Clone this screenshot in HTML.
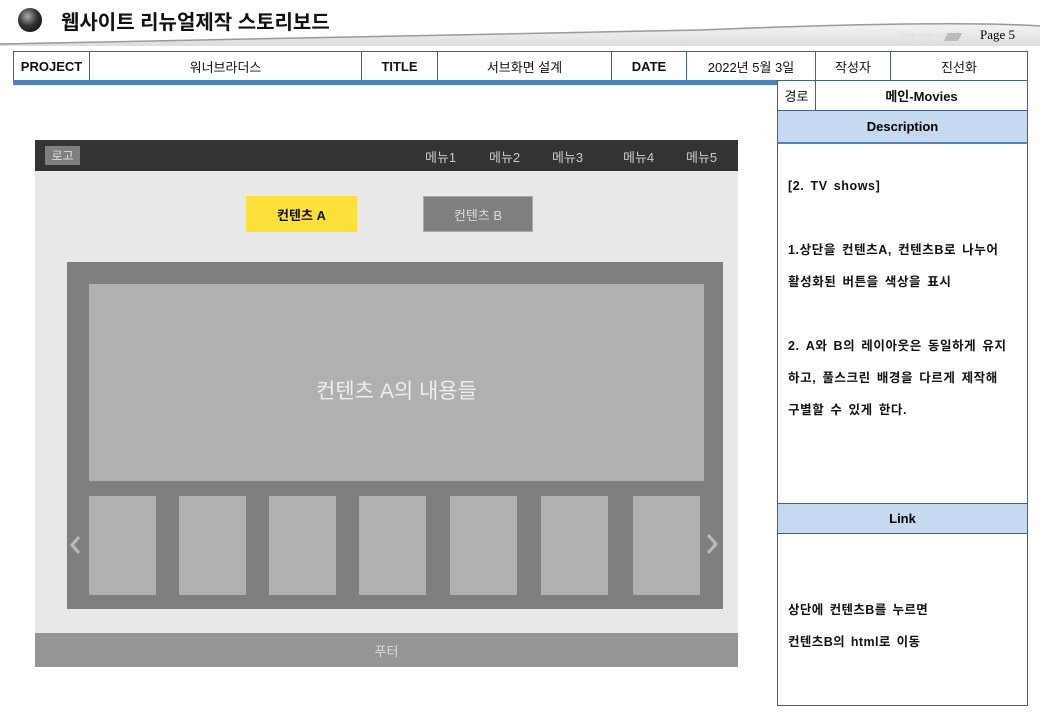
<!DOCTYPE html>
<html><head><meta charset="utf-8"><style>
*{margin:0;padding:0;box-sizing:border-box}
body{width:1040px;height:720px;background:#fff;position:relative;overflow:hidden;font-family:"Liberation Sans","Noto Sans CJK KR",sans-serif}
.a{position:absolute}
.c{display:flex;align-items:center;justify-content:center}
table{border-collapse:collapse;position:absolute}
td{border:1px solid #3e5f92;text-align:center;font-size:13px;color:#111}
.m span{position:absolute;white-space:nowrap}
</style></head><body>
<div class="a" style="left:0;top:0;width:1040px;height:46px;background:linear-gradient(#fff,#f0f0f0 60%,#ddd)"></div>
<svg class="a" style="left:0;top:0" width="1040" height="50"><path d="M0 44 Q300 38 700 30 Q950 20 1040 26 L1040 0 L0 0Z" fill="#fff"/><path d="M0 44 Q300 38 700 30 Q950 20 1040 26" stroke="#999" stroke-width="1.5" fill="none"/></svg>
<div class="a" style="left:18px;top:8px;width:24px;height:24px;border-radius:50%;background:radial-gradient(circle at 40% 35%,#aaa,#333 45%,#000)"></div>
<div class="a" style="left:61px;top:6px;font-size:20px;font-weight:bold;color:#111">웹사이트 리뉴얼제작 스토리보드</div>
<svg class="a" style="left:898px;top:33px" width="64" height="8"><path d="M4 0H18L14 8H0Z M22 0H36L32 8H18Z M40 0H54L50 8H36Z" fill="#e4e4e4"/><path d="M50 0H64L60 8H46Z" fill="#bbb"/></svg>
<div class="a" style="left:980px;top:27px;font-family:'Liberation Serif',serif;font-size:13px">Page 5</div>
<table style="left:13px;top:51px;width:1015px;height:30px"><tr>
<td style="width:76px;font-weight:bold">PROJECT</td><td style="width:272px">워너브라더스</td><td style="width:76px;font-weight:bold">TITLE</td><td style="width:174px">서브화면 설계</td><td style="width:75px;font-weight:bold">DATE</td><td style="width:129px">2022년 5월 3일</td><td style="width:75px">작성자</td><td>진선화</td></tr></table>
<div class="a" style="left:13px;top:80px;width:765px;height:5px;background:#4f81bd"></div>
<table style="left:777px;top:80px;width:251px;height:31px"><tr><td style="width:38px">경로</td><td style="font-weight:bold">메인-Movies</td></tr></table>
<div class="a c" style="left:777px;top:110px;width:251px;height:33px;background:#c5d9f1;border:1px solid #3e5f92;font-size:13px;font-weight:bold">Description</div>
<div class="a" style="left:777px;top:142px;width:251px;height:362px;border:1px solid #3e5f92;border-top:2px solid #4f81bd;font-size:12.5px;letter-spacing:0.6px;word-spacing:2px;font-weight:bold;padding:26px 0 0 10px;line-height:32px;color:#111;white-space:nowrap">[2. TV shows]<br><br>1.상단을 컨텐츠A, 컨텐츠B로 나누어<br>활성화된 버튼을 색상을 표시<br><br>2. A와 B의 레이아웃은 동일하게 유지<br>하고, 풀스크린 배경을 다르게 제작해<br>구별할 수 있게 한다.</div>
<div class="a c" style="left:777px;top:503px;width:251px;height:31px;background:#c5d9f1;border:1px solid #3e5f92;font-size:13px;font-weight:bold">Link</div>
<div class="a" style="left:777px;top:533px;width:251px;height:173px;border:1px solid #3e5f92;font-size:12.5px;letter-spacing:0.4px;word-spacing:2px;font-weight:bold;padding:60px 0 0 10px;line-height:32px;color:#111">상단에 컨텐츠B를 누르면<br>컨텐츠B의 html로 이동</div>
<div class="a" style="left:35px;top:140px;width:703px;height:527px;background:#e8e8e8"></div>
<div class="a" style="left:35px;top:140px;width:703px;height:31px;background:#333"></div>
<div class="a c" style="left:45px;top:146px;width:35px;height:19px;background:#7f7f7f;color:#ddd;font-size:12px">로고</div>
<div class="a m" style="left:425px;top:147px;color:#ccc;font-size:13px"><span style="left:0">메뉴1</span><span style="left:64px">메뉴2</span><span style="left:127px">메뉴3</span><span style="left:198px">메뉴4</span><span style="left:261px">메뉴5</span></div>
<div class="a c" style="left:246px;top:196px;width:111px;height:36px;background:#fde03a;font-size:13px;font-weight:bold;color:#111">컨텐츠 A</div>
<div class="a c" style="left:423px;top:196px;width:110px;height:36px;background:#7f7f7f;border:1px solid #aaa;font-size:13px;color:#ddd">컨텐츠 B</div>
<div class="a" style="left:67px;top:262px;width:656px;height:347px;background:#7f7f7f"></div>
<div class="a c" style="left:89px;top:284px;width:615px;height:210px;top:284px;height:197px;background:#b0b0b0;color:#eee;font-size:21px;padding-top:14px">컨텐츠 A의 내용들</div>
<div class="a" style="left:89px;top:496px;width:67px;height:99px;background:#b0b0b0"></div>
<div class="a" style="left:179px;top:496px;width:67px;height:99px;background:#b0b0b0"></div>
<div class="a" style="left:269px;top:496px;width:67px;height:99px;background:#b0b0b0"></div>
<div class="a" style="left:359px;top:496px;width:67px;height:99px;background:#b0b0b0"></div>
<div class="a" style="left:450px;top:496px;width:67px;height:99px;background:#b0b0b0"></div>
<div class="a" style="left:541px;top:496px;width:67px;height:99px;background:#b0b0b0"></div>
<div class="a" style="left:633px;top:496px;width:67px;height:99px;background:#b0b0b0"></div>
<svg class="a" style="left:68px;top:535px" width="14" height="20"><path d="M11 2 L4 10 L11 18" stroke="#bbb" stroke-width="3" fill="none"/></svg>
<svg class="a" style="left:704px;top:533px" width="16" height="22"><path d="M4 2 L12 11 L4 20" stroke="#bbb" stroke-width="3" fill="none"/></svg>
<div class="a c" style="left:35px;top:633px;width:703px;height:34px;background:#959595;color:#ddd;font-size:13px">푸터</div>
</body></html>
